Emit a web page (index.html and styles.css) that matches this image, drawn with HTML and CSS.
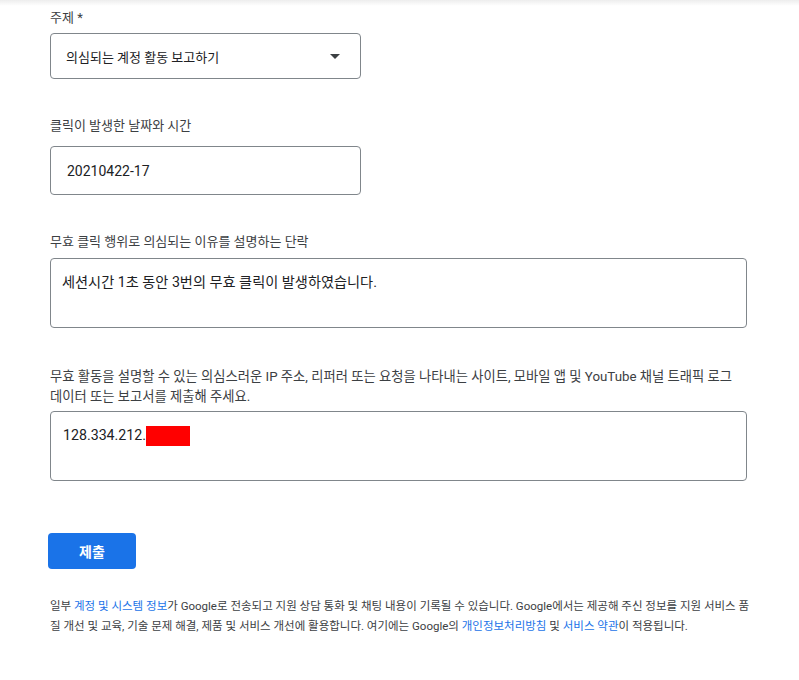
FILE: index.html
```html
<!DOCTYPE html>
<html lang="ko">
<head>
<meta charset="utf-8">
<link rel="stylesheet" href="styles.css">
</head>
<body>
<div class="topshade"></div>
<main class="form">
  <div class="field">
    <div class="label">주제 *</div>
    <div class="select">
      <span>의심되는 계정 활동 보고하기</span>
      <svg class="caret" width="10" height="5" viewBox="0 0 10 5"><path d="M0 0h10L5 5z" fill="#3c4043"/></svg>
    </div>
  </div>
  <div class="field f2">
    <div class="label">클릭이 발생한 날짜와 시간</div>
    <div class="input short"><span>20210422-17</span></div>
  </div>
  <div class="field f3">
    <div class="label">무효 클릭 행위로 의심되는 이유를 설명하는 단락</div>
    <div class="textarea t1">세션시간 1초 동안 3번의 무효 클릭이 발생하였습니다.</div>
  </div>
  <div class="field f4">
    <div class="label long">무효 활동을 설명할 수 있는 의심스러운 IP 주소, 리퍼러 또는 요청을 나타내는 사이트, 모바일 앱 및 YouTube 채널 트래픽 로그<br>데이터 또는 보고서를 제출해 주세요.</div>
    <div class="textarea t2">128.334.212.<span class="redact"></span></div>
  </div>
  <button class="submit">제출</button>
  <p class="note">일부 <a>계정 및 시스템 정보</a>가 Google로 전송되고 지원 상담 통화 및 채팅 내용이 기록될 수 있습니다. Google에서는 제공해 주신 정보를 지원 서비스 품<br>질 개선 및 교육, 기술 문제 해결, 제품 및 서비스 개선에 활용합니다. 여기에는 Google의 <a>개인정보처리방침</a> 및 <a>서비스 약관</a>이 적용됩니다.</p>
</main>
</body>
</html>
```
FILE: styles.css
```css
html, body {
  margin: 0;
  padding: 0;
  background: #fff;
}
body {
  font-family: Roboto, "Noto Sans CJK KR", sans-serif;
  color: #202124;
}
.topshade {
  height: 6px;
  background: linear-gradient(to bottom, rgba(0,0,0,0.07), rgba(0,0,0,0));
}
.form {
  padding-left: 50px;
  padding-top: 2px;
}
.label {
  font-size: 13px;
  line-height: 20px;
  color: #3c4043;
  white-space: nowrap;
}
.label.long {
  font-size: 13.3px;
}
.select {
  margin-top: 5px;
  width: 311px;
  height: 46px;
  box-sizing: border-box;
  border: 1px solid #80868b;
  border-radius: 4px;
  display: flex;
  align-items: center;
  justify-content: space-between;
  padding: 0 20px 0 15px;
  font-size: 13px;
}
.caret { display: block; }
.f2 { margin-top: 37px; }
.input {
  margin-top: 10px;
  width: 311px;
  height: 49px;
  box-sizing: border-box;
  border: 1px solid #80868b;
  border-radius: 4px;
  display: flex;
  align-items: center;
  padding: 0 16px;
  font-size: 14px;
}
.f3 { margin-top: 37px; }
.textarea {
  width: 697px;
  height: 70px;
  box-sizing: border-box;
  border: 1px solid #80868b;
  border-radius: 4px;
  padding: 13px 11px 0;
  font-size: 14.2px;
  line-height: 20px;
}
.t1 { margin-top: 6px; }
.f4 { margin-top: 39px; }
.t2 { margin-top: 4px; padding-left: 12px; }
.redact {
  display: inline-block;
  width: 44px;
  height: 20px;
  background: #ff0000;
  vertical-align: top;
  margin-top: 1px;
}
.submit {
  display: block;
  margin: 52px 0 0 -2px;
  width: 88px;
  height: 36px;
  border: none;
  border-radius: 4px;
  background: #1a73e8;
  color: #fff;
  font-family: Roboto, "Noto Sans CJK KR", sans-serif;
  font-size: 14px;
  font-weight: 700;
}
.note {
  margin: 27px 0 0;
  font-size: 11.5px;
  line-height: 20px;
  color: #3c4043;
  white-space: nowrap;
}
.note a {
  color: #1a73e8;
}
```
